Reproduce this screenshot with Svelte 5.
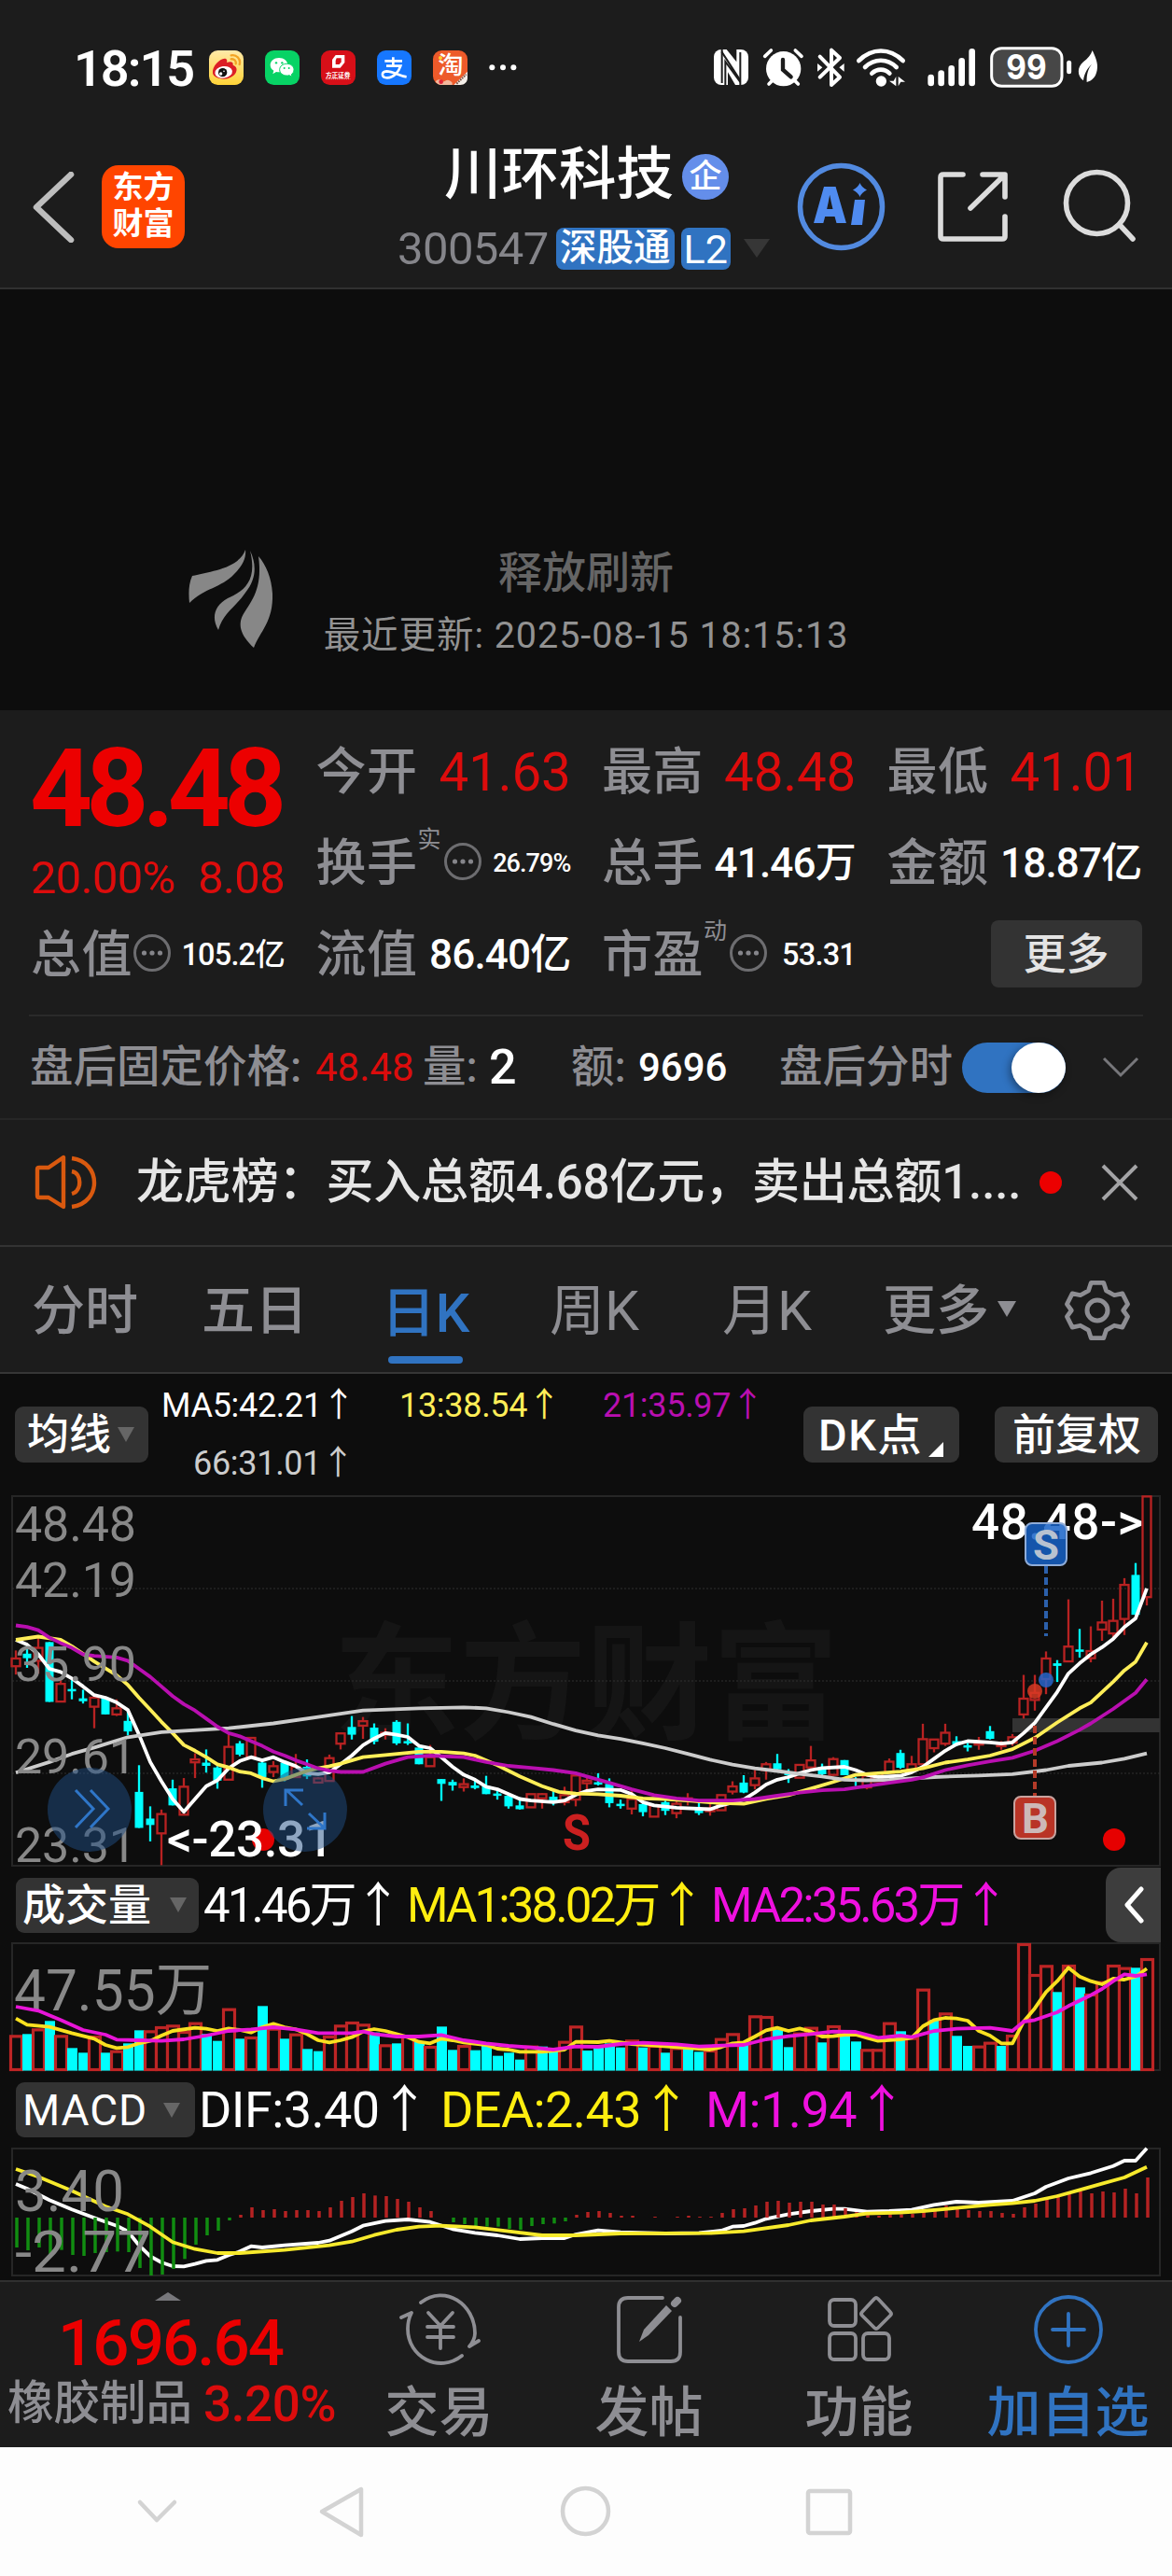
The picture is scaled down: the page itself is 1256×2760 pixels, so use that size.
<script lang="ts">
  type Point = [number, number];

  const STEP = 12;
  const px = (i: number) => 10 + i * STEP;

  // every pane keeps its own vertical origin and scale
  const priceY = (v: number) => (v - 385) * 0.3444;
  const volY = (v: number) => (v - 275) / 3;
  const macdY = (v: number) => (v - 936) / 3;

  const parse = (s: string): Point[] =>
    s
      .trim()
      .split(/\s+/)
      .map((p) => p.split(',').map(Number) as Point);

  const line = (s: string, y: (v: number) => number) =>
    parse(s)
      .map(([i, v]) => `${px(i)},${y(v).toFixed(1)}`)
      .join(' ');

  // up/down, body top, body bottom, high, low
  const candles = `
    r893,917,868,943 c878,892,848,922 r860,900,830,940 c842,1028,842,1028 r972,1027,960,1027 c988,995,960,1020
    c1017,1026,990,1033 r1015,1043,1010,1110 c1015,1067,1015,1067 r1048,1067,1020,1072 c1087,1120,1050,1132
    c1308,1420,1225,1420 c1391,1411,1353,1462 r1377,1437,1363,1536 c1297,1350,1270,1350 r1292,1379,1265,1380
    r1207,1216,1188,1265 c1217,1227,1176,1248 c1232,1273,1228,1298 r1168,1270,1128,1270 c1157,1192,1150,1197
    r1140,1200,1140,1200 c1217,1262,1212,1295 r1228,1246,1212,1262 c1217,1270,1217,1275 r1230,1262,1190,1262
    c1230,1260,1207,1268 r1266,1279,1262,1279 r1203,1274,1192,1274 r1126,1158,1126,1176 c1106,1130,1072,1145
    r1088,1102,1075,1143 c1108,1152,1095,1160 r1124,1130,1110,1145 c1090,1157,1085,1162 c1150,1156,1095,1162
    c1170,1222,1170,1222 r1200,1228,1162,1228 c1268,1283,1268,1336 c1277,1288,1270,1304 r1284,1293,1266,1307
    c1288,1296,1270,1300 c1290,1315,1258,1315 c1313,1320,1305,1332 c1320,1353,1318,1360 c1350,1362,1325,1363
    r1315,1356,1315,1356 r1315,1328,1312,1360 c1323,1340,1305,1350 r1318,1340,1292,1350 r1257,1332,1257,1353
    r1273,1281,1262,1300 c1278,1284,1250,1288 c1283,1343,1266,1356 c1345,1351,1332,1360 r1330,1360,1300,1378
    c1346,1371,1340,1384 r1350,1385,1350,1385 c1340,1367,1335,1380 r1345,1374,1335,1390 r1328,1335,1312,1350
    c1362,1374,1340,1380 r1360,1368,1340,1382 r1318,1365,1318,1365 r1291,1307,1275,1316 c1279,1310,1256,1312
    r1266,1287,1240,1300 r1222,1240,1215,1270 c1219,1238,1190,1243 c1246,1256,1237,1280 r1224,1264,1224,1264
    r1210,1232,1165,1238 c1232,1253,1220,1257 r1206,1255,1200,1258 c1209,1256,1209,1256 c1268,1276,1262,1290
    r1258,1294,1250,1300 r1250,1275,1250,1275 r1214,1248,1204,1248 c1187,1233,1177,1236 r1222,1240,1196,1245
    r1144,1222,1096,1222 r1145,1172,1145,1185 r1124,1158,1096,1165 c1150,1160,1135,1166 c1163,1168,1155,1182
    r1155,1160,1137,1177 c1119,1143,1103,1145 r1160,1165,1150,1177 r1138,1155,1128,1165 r1018,1067,944,1080
    r1000,1022,944,1055 r893,957,871,1004 c908,916,898,966 r856,902,709,902 c865,871,801,890 r870,892,793,905
    r781,803,713,838 r776,815,707,830 r664,770,643,820 c633,757,596,757 r389,702,389,728`
    .trim()
    .split(/\s+/)
    .map((s, i) => {
      const [top, bottom, high, low] = s.slice(1).split(',').map((v) => priceY(+v));
      return { x: px(i), up: s[0] === 'r', top, bottom, high, low };
    });

  const ma5 = line(
    '0,835 1,850 2,880 3,925 4,935 5,955 6,980 7,1007 8,1015 9,1030 10,1053 11,1130 12,1215 13,1275 14,1330 15,1370 16,1330 17,1290 18,1272 19,1235 20,1212 21,1200 22,1210 23,1200 24,1215 25,1228 26,1250 27,1253 28,1247 29,1222 30,1195 31,1163 32,1142 33,1125 34,1130 35,1137 36,1165 37,1172 38,1200 39,1230 40,1255 41,1270 42,1292 43,1300 44,1315 45,1330 46,1335 48,1340 49,1335 50,1317 51,1305 52,1300 54,1302 55,1315 56,1340 57,1350 59,1357 62,1362 63,1350 65,1332 66,1310 67,1285 68,1270 69,1262 70,1250 71,1240 72,1234 74,1230 75,1240 76,1255 77,1262 79,1258 80,1247 81,1230 82,1205 83,1180 84,1160 85,1150 87,1154 88,1158 89,1154 90,1125 91,1093 92,1045 93,997 94,940 95,908 96,880 97,858 98,832 99,795 100,768 101,675',
    priceY
  );
  const ma13 = line(
    '0,835 2,825 4,835 5,855 7,902 9,945 10,975 11,1015 12,1052 13,1090 14,1125 15,1162 16,1180 17,1200 18,1222 19,1232 20,1245 21,1250 22,1265 23,1275 24,1268 25,1255 26,1243 27,1235 28,1228 29,1220 31,1200 33,1193 36,1183 38,1183 40,1188 41,1195 43,1225 45,1260 47,1290 48.5,1308 50,1313 52,1315 54,1320 56,1328 58,1330 60,1335 63,1343 65,1345 67,1330 69,1318 71,1298 73,1277 75,1255 77,1250 79,1245 81,1235 83,1217 85,1207 87,1195 89,1175 91,1140 93,1092 95,1048 96,1030 98,965 99,930 100,903 101,843',
    priceY
  );
  const ma21 = line(
    '0,790 1,795 2,805 3,828 4,845 5,860 6,880 7,885 9,890 10,900 11,925 12,950 13,980 14,1010 15,1035 16,1055 17,1080 18,1105 19,1125 20,1135 21,1150 22,1165 23,1183 24,1195 25,1210 26,1222 27,1235 28,1242 29,1246 31,1246 33,1220 35,1200 37,1195 40,1200 42,1215 44,1227 46,1233 48,1240 50,1250 51,1260 53,1280 55,1300 57,1318 59,1328 61,1335 64,1335 66,1330 68,1320 70,1310 72,1303 74,1300 76,1290 78,1280 80,1270 81,1263 83,1240 85,1225 87,1213 89,1202 91,1180 93,1150 95,1115 96,1095 98,1050 100,1000 101,958',
    priceY
  );
  const ma66 = line(
    '0,1248 3,1215 5,1190 7,1170 10,1138 13,1122 19,1110 23,1095 27,1075 31,1055 36,1048 40,1045 42,1048 44,1060 46,1075 48,1097 50,1117 52,1132 54,1143 56,1157 58,1172 60,1190 62,1208 64,1223 66,1235 68,1243 70,1252 72,1260 74,1270 76,1272 78,1270 82,1262 86,1257 89,1253 92,1240 94,1227 97,1217 99,1205 101,1188',
    priceY
  );

  const volumes = `
    r573 c570 r552 c528 r573 c615 c630 r575 c630 r622 c600 c558 r558 r545 r540 r560 r532 c570 c592 r487
    c585 r578 c480 r550 c585 r568 c618 c625 r575 r540 r530 r537 c565 r603 c600 r575 c595 r608 c546 c621
    r605 c622 c605 c640 c630 c652 r607 c610 c620 r592 r543 c623 c612 c600 c613 r588 c613 r605 c630 r612
    c618 c627 r620 r583 r567 c605 r510 r512 c555 c612 r565 r547 c597 r542 c570 c594 r618 r618 r532 c561
    r580 r424 c525 r501 c576 c608 r607 r595 c608 r572 r278 r377 r348 c435 r347 c420 r440 r400 r347 r355
    c357 r326`
    .trim()
    .split(/\s+/)
    .map((s, i) => ({ x: px(i), up: s[0] === 'r', top: volY(+s.slice(1)) }));

  const volMa1 = line(
    '0,520 1,540 3,547 5,567 7,585 8,605 9,615 10,612 11,600 12,592 13,575 14,560 16,550 17,553 18,560 19,552 20,557 21,565 22,548 23,537 24,548 25,555 26,570 27,590 28,597 29,590 30,580 31,562 32,554 33,560 34,570 35,580 36,595 37,600 38,585 39,590 40,597 42,605 43,617 44,620 45,627 47,627 49,620 50,595 52,596 53,592 55,602 57,607 59,612 61,617 62,620 63,612 64,600 65,597 66,578 67,558 68,550 69,560 70,552 71,562 72,578 73,577 74,572 75,572 76,582 77,592 79,587 80,582 81,545 82,525 83,518 84,520 85,527 86,560 87,575 88,600 89,600 90,530 91,487 92,435 93,400 94,357 95,385 96,400 97,410 98,392 99,395 100,385 101,360',
    volY
  );
  const volMa2 = line(
    '0,482 2,495 4,525 6,557 8,572 9,588 11,590 13,592 15,587 17,575 19,560 21,555 23,548 25,555 27,567 30,567 31,562 32,570 34,578 36,578 38,573 40,590 42,600 44,608 46,613 48,620 50,610 52,611 54,602 56,598 59,603 61,610 63,607 65,605 67,587 69,577 71,570 73,562 75,563 77,582 79,575 80,580 82,560 84,553 87,550 89,560 90,530 91,525 93,500 94,480 96,445 97,425 98,400 99,378 100,383 101,378',
    volY
  );

  const MACD_ZERO = 1161;
  const macd = [
    1257, 1266, 1257, 1281, 1265, 1281, 1284, 1275, 1272, 1270, 1272, 1323, 1347, 1344, 1326, 1294, 1248, 1218,
    1203, 1170, 1152, 1128, 1137, 1134, 1140, 1137, 1137, 1140, 1128, 1107, 1095, 1083, 1090, 1092, 1101, 1110,
    1128, 1140, 1161, 1176, 1182, 1188, 1190, 1190, 1197, 1200, 1188, 1182, 1180, 1173, 1152, 1143, 1140, 1146,
    1155, 1155, 1161, 1158, 1161, 1158, 1155, 1158, 1158, 1146, 1134, 1131, 1122, 1110, 1107, 1113, 1110, 1110,
    1119, 1119, 1131, 1143, 1152, 1155, 1149, 1150, 1149, 1137, 1131, 1122, 1128, 1137, 1140, 1140, 1146, 1149,
    1128, 1116, 1095, 1086, 1077, 1077, 1083, 1077, 1080, 1068, 1083, 1032,
  ];
  const dif = line(
    '0,1053 1,1068 3,1105 5,1135 7,1162 9,1187 10,1205 11,1250 12,1285 13,1305 14,1317 15,1318 16,1310 17,1300 18,1297 19,1282 20,1270 21,1253 22,1257 24,1250 27,1242 28,1235 29,1220 30,1205 31,1187 33,1172 35,1167 37,1175 39,1198 41,1210 43,1218 45,1230 47,1227 49,1227 50,1215 52,1202 54,1208 58,1212 61,1210 63,1203 64,1190 65,1188 66,1178 67,1165 69,1150 71,1140 73,1133 74,1133 76,1142 78,1140 80,1136 82,1120 84,1110 86,1113 89,1107 90,1095 91,1083 92,1062 94,1035 96,1018 98,995 99,978 100,978 101,938',
    macdY
  );
  const dea = line(
    '0,1005 2,1030 5,1075 8,1125 10,1150 12,1190 14,1240 16,1262 18,1275 20,1275 24,1265 28,1250 30,1238 32,1217 34,1200 36,1190 38,1187 41,1192 44,1205 47,1218 50,1218 54,1212 62,1211 65,1205 69,1185 71,1170 74,1158 76,1148 79,1145 81,1140 84,1130 87,1120 89,1115 91,1107 93,1092 95,1072 97,1052 99,1032 101,998',
    macdY
  );

  const priceLabels = [
    { text: '48.48', y: 49 },
    { text: '42.19', y: 109 },
    { text: '35.90', y: 199 },
    { text: '29.61', y: 298 },
    { text: '23.31', y: 393 },
  ];
</script>

{#snippet more()}
  <svg class="more-dot" width="42" height="42" viewBox="0 0 42 42">
    <circle cx="21" cy="21" r="18.5" />
    <circle class="fill" cx="12.5" cy="21" r="2.6" />
    <circle class="fill" cx="21" cy="21" r="2.6" />
    <circle class="fill" cx="29.5" cy="21" r="2.6" />
  </svg>
{/snippet}

<div class="screen">
  <div class="status">
    <span class="clock">18:15</span>
    <svg class="apps" width="350" height="70" viewBox="0 0 1050 210">
      <defs>
        <linearGradient id="weibo" x2="0" y2="1">
          <stop offset="0" stop-color="#ffe9a8" />
          <stop offset="1" stop-color="#ffd338" />
        </linearGradient>
      </defs>
      <rect x="42" y="42" width="111" height="111" rx="28" fill="url(#weibo)" />
      <path d="M54 115c-3-22 22-46 38-47 8 0 9 7 7 13 12-5 22-3 20 8 13 5 14 15 9 25-7 12-22 20-38 20-20 0-35-8-36-19z" fill="#dc1f26" />
      <ellipse cx="89" cy="112" rx="28" ry="19" fill="#fff" transform="rotate(-8 89 112)" />
      <circle cx="86" cy="113" r="14" fill="#111" />
      <circle cx="80" cy="117" r="5" fill="#fff" />
      <circle cx="90" cy="109" r="2.5" fill="#fff" />
      <path d="M113 58c17-4 32 12 27 29M113 70c10-2 17 6 15 15" fill="none" stroke="#f3a324" stroke-width="7" stroke-linecap="round" />

      <rect x="222" y="42" width="111" height="111" rx="28" fill="#07d365" />
      <path d="M267 66c16 0 28 10 28 23s-12 23-28 23c-3 0-6 0-9-1l-11 7 3-11c-7-4-11-11-11-18 0-13 12-23 28-23z" fill="#fff" />
      <path d="M292 85c13 0 23 8 23 19 0 6-3 12-8 15l2 8-9-5c-3 1-5 1-8 1-13 0-23-8-23-19s10-19 23-19z" fill="#fff" stroke="#07d365" stroke-width="3" />
      <g fill="#07d365">
        <circle cx="258" cy="82" r="3.5" /><circle cx="277" cy="82" r="3.5" />
        <circle cx="284" cy="99" r="3" /><circle cx="299" cy="99" r="3" />
      </g>

      <rect x="402" y="42" width="111" height="111" rx="28" fill="#d70f18" />
      <path d="M449 57h29v24l-14 17h-26V72z" fill="#fff" />
      <path d="M452 67h15v12l-6 8h-12V75z" fill="#d70f18" />
      <text x="417" y="128" font-size="20" font-weight="700" fill="#fff" textLength="79">方正证券</text>
      <path d="M417 134h79" stroke="#f0a0a0" stroke-width="3" stroke-dasharray="4 2" />

      <rect x="582" y="42" width="111" height="111" rx="28" fill="#1677ff" />
      <path d="M634 64v28M607 76h56M612 92h46c-6 18-22 38-43 38-20 0-20-20-2-21 22 0 38 14 64 18" fill="none" stroke="#fff" stroke-width="8" />

      <rect x="762" y="42" width="111" height="111" rx="28" fill="#ed5a2a" />
      <text x="778" y="116" font-size="80" font-weight="500" fill="#fff" textLength="82" lengthAdjust="spacingAndGlyphs">淘</text>
      <path d="M873 110v20c0 14-9 23-24 23h-20z" fill="#f4eee8" />
      <path d="M838 149l31-30" stroke="#7a5040" stroke-width="6" stroke-dasharray="5 3" />
      <circle cx="786" cy="66" r="6" fill="#ffd02f" />
      <path d="M770 142c12-12 20-4 24 0s14-16 30 4v7h-36c-8 0-14-4-18-11z" fill="#f3b79c" />
      <circle cx="788" cy="143" r="7" fill="#df2538" />
      <g fill="#fff"><circle cx="952" cy="97" r="9" /><circle cx="987" cy="97" r="9" /><circle cx="1021" cy="97" r="9" /></g>
    </svg>
    <svg class="system" width="440" height="70" viewBox="0 0 1320 210">
      <rect x="45" y="39" width="111" height="114" rx="24" fill="#fff" />
      <path d="M71 39v108M130 153V48" stroke="#1c1c1c" stroke-width="6" />
      <path d="M70 46l60 92M82 153V78l48 66" fill="none" stroke="#1c1c1c" stroke-width="6" />
      <path d="M90 112v41h24z" fill="#1c1c1c" />
      <path d="M86 39h32v40z" fill="#1c1c1c" />
      <circle cx="269" cy="101" r="56" fill="#fff" />
      <path d="M209 61l20-19M327 61l-20-19M222 150l16-16M316 150l-16-16" stroke="#fff" stroke-width="11" stroke-linecap="round" />
      <path d="M267 72v32l26 23" fill="none" stroke="#1c1c1c" stroke-width="13" stroke-linecap="round" />
      <path d="M386 128l64-62-27-25v112l27-25-64-66" fill="none" stroke="#fff" stroke-width="12" stroke-linejoin="round" stroke-linecap="round" />
      <path d="M378 84v26l16-13zM464 84v26l-16-13z" fill="#fff" />
      <path d="M511 75c43-42 99-42 142 0M531 96c30-29 72-29 101 0M553 116c17-16 41-16 57 0" fill="none" stroke="#fff" stroke-width="14" stroke-linecap="round" />
      <circle cx="583" cy="141" r="17" fill="#fff" />
      <path d="M631 126v31l-22-17h14zM638 157v-31l22 17h-14z" fill="#fff" />
      <path d="M743 129v18M776 116v31M809 100v47M842 76v71M875 46v101" stroke="#fff" stroke-width="20" stroke-linecap="round" />
      <rect x="938" y="35" width="226" height="122" rx="32" fill="#474747" stroke="#fff" stroke-width="9" />
      <text x="985" y="136" font-family="Inter" font-size="112" font-weight="700" fill="#fff" textLength="130" lengthAdjust="spacingAndGlyphs">99</text>
      <path d="M1187 82v28" stroke="#fff" stroke-width="15" stroke-linecap="round" />
      <path d="M1262 42c8 18 20 40 15 64-4 22-16 34-33 38-1-24 4-44 17-58-17 14-25 32-28 53-21-15-20-44 0-60 15-12 24-22 29-37z" fill="#fff" />
    </svg>
  </div>

  <header class="header">
    <svg class="back" width="46" height="76" viewBox="0 0 46 76"><path d="M42 3L5 38l37 35" /></svg>
    <div class="logo"><span>东方</span><span>财富</span></div>
    <div class="title">
      <div class="name">川环科技<i>企</i></div>
      <div class="code">
        <span>300547</span><b class="tag">深股通</b><b class="tag">L2</b>
        <svg width="28" height="20" viewBox="0 0 28 20"><path d="M0 0h28L14 20z" fill="#363636" /></svg>
      </div>
    </div>
    <svg class="tools" width="370" height="100" viewBox="0 0 370 100">
      <circle cx="51.500" cy="51.500" r="44" fill="none" stroke="#528ae0" stroke-width="5.5" />
      <text x="21" y="69" font-family="Inter" font-size="54" font-weight="900" fill="#4f8bf0" textLength="37" lengthAdjust="spacingAndGlyphs">A</text>
      <path d="M66 44h11l-3 27H62zM71.500 26q2 5 7.500 7.500-5.500 2.500-7.500 7.500-2-5-7.500-7.500 5.500-2.500 7.500-7.500z" fill="#4f8bf0" />
      <g fill="none" stroke="#dcdcdc" stroke-width="5.600" stroke-linecap="round" stroke-linejoin="round">
        <path d="M182 17h-21q-3 0-3 3v63q0 3 3 3h63q3 0 3-3V62M203 17h24v24M226 18L190 53" />
        <circle cx="325.500" cy="47.500" r="33" />
        <path d="M350 71l14 15" />
      </g>
    </svg>
  </header>

  <section class="refresh">
    <svg width="94" height="108" viewBox="0 0 94 108">
      <g fill="#878787">
        <path d="M62 1C55 21 25 24 5 29 1 38 1 48 2 58c16-16 34-16 48-31 9-9 13-17 12-26z" />
        <path d="M67 2c8 32-6 43-24 51-14 8-18 20-10 34 5-18 18-24 29-40 12-15 12-30 5-45z" />
        <path d="M76 8c4 30-4 44-15 60-8 12-5 24 10 38 7-18 21-28 20-58-1-17-7-31-15-40z" />
      </g>
    </svg>
    <div class="refresh-text">
      <strong>释放刷新</strong>
      <span>最近更新: 2025-08-15 18:15:13</span>
    </div>
  </section>

  <section class="quote">
    <div class="price">
      <strong>48.48</strong>
      <div><span>20.00%</span><span>8.08</span></div>
    </div>
    <div class="cell"><label>今开</label><b class="red">41.63</b></div>
    <div class="cell"><label>最高</label><b class="red">48.48</b></div>
    <div class="cell"><label>最低</label><b class="red">41.01</b></div>
    <div class="cell"><label>换手</label><sup>实</sup>{@render more()}<b class="xs">26.79%</b></div>
    <div class="cell"><label>总手</label><b>41.46万</b></div>
    <div class="cell"><label>金额</label><b>18.87亿</b></div>
    <div class="cell"><label>总值</label>{@render more()}<b class="sm">105.2亿</b></div>
    <div class="cell"><label>流值</label><b>86.40亿</b></div>
    <div class="cell"><label>市盈</label><sup>动</sup>{@render more()}<b class="sm">53.31</b></div>
    <div class="cell end"><button>更多</button></div>
  </section>

  <section class="after">
    <span>盘后固定价格:</span>
    <b class="red">48.48</b>
    <span>量:</span>
    <b class="big">2</b>
    <span>额:</span>
    <b>9696</b>
    <span>盘后分时</span>
    <div class="toggle"><i></i></div>
    <svg width="40" height="26" viewBox="0 0 40 26"><path d="M2 3l18 18L38 3" fill="none" stroke="#77777b" stroke-width="3" /></svg>
  </section>

  <section class="news">
    <svg width="68" height="60" viewBox="0 0 68 60">
      <path d="M3 16q0-2 2-2h10L31 3v53L15 46H5q-2 0-2-2zM40 18c11 2 11 21 0 24M40 4c32 4 32 48 0 52" fill="none" stroke="#d9590f" stroke-width="4.4" stroke-linejoin="round" />
    </svg>
    <p>龙虎榜：买入总额4.68亿元，卖出总额1....</p>
    <i></i>
    <svg width="40" height="42" viewBox="0 0 40 42"><path d="M2 3l36 36M38 3L2 39" stroke="#a4a4a6" stroke-width="4" /></svg>
  </section>

  <nav class="tabs">
    <span>分时</span>
    <span>五日</span>
    <span class="active">日K</span>
    <span>周K</span>
    <span>月K</span>
    <span>更多<svg width="20" height="17" viewBox="0 0 20 17"><path d="M0 0h20L10 17z" fill="#8e8e93" /></svg></span>
    <svg width="70" height="70" viewBox="0 0 70 70" fill="none" stroke="#8e8e93" stroke-width="5" stroke-linejoin="round">
      <path d="M28 4h14l3 9 9 5 9-2 6 12-5 7 5 7-6 12-9-2-9 5-3 9H28l-3-9-9-5-9 2-6-12 5-7-5-7 6-12 9 2 9-5z" transform="translate(1.5 1.5) scale(.957)" />
      <circle cx="35" cy="35" r="11" />
    </svg>
  </nav>

  <section class="charts">
    <div class="ma-bar">
      <span class="pill">均线<i class="down"></i></span>
      <div class="ma-list">
        <span>MA5:42.21↑</span>
        <span class="yellow">13:38.54↑</span>
        <span class="purple">21:35.97↑</span>
        <span class="silver">66:31.01↑</span>
      </div>
      <span class="pill dk">DK点<i class="corner"></i></span>
      <span class="pill adj">前复权</span>
    </div>

    <svg class="pane" width="1237" height="399" viewBox="0 0 1237 399">
      <text x="350" y="251" font-size="136" font-weight="700" fill="#151515" textLength="542" lengthAdjust="spacingAndGlyphs">东方财富</text>
      <rect class="frame" x="6" y="1" width="1230" height="396" />
      {#each [100, 199, 298] as y}
        <line class="grid" x1="6" x2="1236" y1={y} y2={y} />
      {/each}
      <rect x="1078" y="239" width="158" height="15" fill="#333" />
      {#each candles as c}
        <line x1={c.x} x2={c.x} y1={c.high} y2={c.up ? c.top : c.low} class={c.up ? 'up' : 'down-line'} />
        {#if c.up}
          <line x1={c.x} x2={c.x} y1={c.bottom} y2={c.low} class="up" />
          <rect class="up" x={c.x - 4.5} y={c.top} width="9" height={Math.max(2, c.bottom - c.top)} />
        {:else}
          <rect x={c.x - 4.5} y={c.top} width="9" height={Math.max(2.5, c.bottom - c.top)} fill="#00ffff" />
        {/if}
      {/each}
      <polyline points={ma5} stroke="#fff" />
      <polyline points={ma13} stroke="#ffee58" />
      <polyline points={ma66} stroke="#ccc" />
      <polyline points={ma21} stroke="#b90fb0" />
      {#each priceLabels as l}
        <text class="axis" x="9" y={l.y} font-size="52" textLength="130">{l.text}</text>
      {/each}
      <circle cx="275" cy="369" r="12" fill="#e60000" />
      <text x="172" y="387" font-size="53" font-weight="500" fill="#fff" textLength="178">&lt;-23.31</text>
      <g fill="#204d83" fill-opacity=".5">
        <circle cx="89" cy="337" r="45" />
        <circle cx="320" cy="337" r="45" />
      </g>
      <path d="M74 316l19 20-19 20M90 316l19 20-19 20M317 332l-17-16M299 333v-17h19M324 341l17 16M341 340v17h-19" fill="none" stroke="#2f76c8" stroke-width="3" />
      <text x="596" y="380" font-size="54" font-weight="700" fill="#cb2020" textLength="30" lengthAdjust="spacingAndGlyphs">S</text>
      <circle cx="1187" cy="369" r="12" fill="#e60000" />
      <text x="1034" y="47" font-size="53" font-weight="500" fill="#fff" textLength="184">48.48-&gt;</text>
      <line x1="1114" x2="1114" y1="76" y2="151" stroke="#2c60ab" stroke-width="4" stroke-dasharray="8 4" />
      <line x1="1102" x2="1102" y1="247" y2="322" stroke="#b33a28" stroke-width="4" stroke-dasharray="8 4" />
      <circle cx="1114" cy="198" r="8" fill="#2865ca" fill-opacity=".85" />
      <circle cx="1102" cy="210" r="8" fill="#d83a24" fill-opacity=".85" />
      <rect x="1092" y="30" width="44" height="45" rx="7" fill="#1763c8" fill-opacity=".85" stroke="#8facd8" stroke-width="2" />
      <text x="1100" y="69" font-size="44" font-weight="700" fill="#b8c2d0" textLength="28" lengthAdjust="spacingAndGlyphs">S</text>
      <rect x="1080" y="323" width="44" height="45" rx="7" fill="#b93426" stroke="#c7a39f" stroke-width="2" />
      <text x="1088" y="362" font-size="44" font-weight="700" fill="#cdb9b8" textLength="29" lengthAdjust="spacingAndGlyphs">B</text>
    </svg>

    <div class="legend vol">
      <span class="pill">成交量<i class="down"></i></span>
      <span>41.46万↑</span>
      <span class="yellow">MA1:38.02万↑</span>
      <span class="pink">MA2:35.63万↑</span>
      <span class="fold">
        <svg width="22" height="40" viewBox="0 0 22 40"><path d="M19 3L4 20l15 17" fill="none" stroke="#fff" stroke-width="5" stroke-linecap="round" stroke-linejoin="round" /></svg>
      </span>
    </div>

    <svg class="pane" width="1237" height="139" viewBox="0 0 1237 139">
      <rect class="frame" x="6" y="1" width="1230" height="136" />
      {#each volumes as v}
        {#if v.up}
          <rect class="vol-up" x={v.x - 5.500} y={v.top + 1.5} width="12" height={135 - v.top} />
        {:else}
          <rect x={v.x - 5} y={v.top} width="11" height={137.5 - v.top} fill="#00ffff" />
        {/if}
      {/each}
      <text class="axis" x="8" y="73" font-size="62" textLength="212" lengthAdjust="spacingAndGlyphs">47.55万</text>
      <polyline points={volMa1} stroke="#f9e020" />
      <polyline points={volMa2} stroke="#e815d8" />
    </svg>

    <div class="legend macd">
      <span class="pill">MACD<i class="down"></i></span>
      <span>DIF:3.40↑</span>
      <span class="yellow">DEA:2.43↑</span>
      <span class="pink">M:1.94↑</span>
    </div>

    <svg class="pane" width="1237" height="139" viewBox="0 0 1237 139">
      <rect class="frame" x="6" y="1" width="1230" height="136" />
      <polyline points={dif} stroke="#fff" />
      {#each macd as v, i}
        <line x1={px(i) + 1} x2={px(i) + 1} y1={macdY(MACD_ZERO)} y2={macdY(v)} stroke={v > MACD_ZERO ? '#118d11' : '#b52222'} stroke-width="3.5" />
      {/each}
      <polyline points={dea} stroke="#f7ea2c" />
      <text class="axis" x="9" y="68" font-size="62" textLength="117" lengthAdjust="spacingAndGlyphs">3.40</text>
      <text class="axis" x="9" y="133" font-size="62" textLength="146" lengthAdjust="spacingAndGlyphs">-2.77</text>
    </svg>
  </section>

  <footer class="bottom">
    <div class="index">
      <i class="up-mark"></i>
      <strong>1696.64</strong>
      <div><span>橡胶制品</span><b>3.20%</b></div>
    </div>
    <div class="action">
      <svg width="88" height="80" viewBox="0 0 88 80">
        <path d="M24 10C50-10 82 12 82 43q0 7-6 14l10-6M68 67C44 86 10 69 10 38q0-9 4-17L3 26" />
        <path d="M32 21l13 14 13-14M31 36h28M31 47h28M45 35v24" />
      </svg>
      <span>交易</span>
    </div>
    <div class="action">
      <svg width="88" height="80" viewBox="0 0 88 80">
        <path d="M58 5H21q-10 0-10 10v48q0 10 10 10h46q10 0 10-10V26" />
        <path d="M33 52l5-13 24-26 6 6-25 26z" fill="#8e8e93" stroke="none" />
        <path d="M71 11l3-3" stroke-width="8" />
      </svg>
      <span>发帖</span>
    </div>
    <div class="action">
      <svg width="88" height="80" viewBox="0 0 88 80">
        <rect x="12" y="7" width="28" height="28" rx="5" />
        <rect x="12" y="43" width="28" height="28" rx="5" />
        <rect x="48" y="43" width="28" height="28" rx="5" />
        <path d="M60 6q2-2 4 0l13 14q2 2 0 4L64 37q-2 2-4 0L47 24q-2-2 0-4z" />
      </svg>
      <span>功能</span>
    </div>
    <div class="action blue">
      <svg width="88" height="80" viewBox="0 0 88 80">
        <circle cx="44" cy="39" r="35" />
        <path d="M44 22v34M27 39h34" />
      </svg>
      <span>加自选</span>
    </div>
  </footer>

  <div class="sysnav">
    <svg width="1256" height="138" viewBox="0 0 1256 138" fill="none" stroke="#d3d3d3" stroke-width="4.5" stroke-linejoin="round" stroke-linecap="round">
      <path d="M150 59l18 19 19-19" />
      <path d="M387 45v49L345 69z" />
      <circle cx="627.5" cy="68.5" r="24.5" />
      <rect x="866" y="47" width="45" height="45" rx="2" />
    </svg>
  </div>
</div>

<style>
  :global(body) {
    margin: 0;
    background: #1c1c1c;
  }

  .screen {
    width: 1256px;
    height: 2760px;
    overflow: hidden;
    background: #1c1c1c;
    color: #fff;
    font-family: Roboto, 'Noto Sans CJK SC', sans-serif;
    line-height: 1;
    white-space: nowrap;
  }

  svg {
    display: block;
    flex: none;
  }

  i {
    font-style: normal;
  }

  b {
    font-weight: 500;
  }

  .red {
    color: #dc0c0c;
  }

  .yellow {
    color: #ffee10;
  }

  .status {
    display: grid;
    grid-template-columns: 131px 350px 440px;
    height: 140px;
    padding-left: 79px;
    align-items: start;
  }

  .clock {
    padding-top: 47px;
    font-size: 54px;
    font-weight: 600;
    letter-spacing: -2px;
  }

  .apps,
  .system {
    margin-top: 40px;
  }

  .system {
    margin-left: 190px;
  }

  .header {
    display: grid;
    grid-template-columns: 75px 90px 222px 453px 370px;
    height: 170px;
    padding-left: 34px;
    border-bottom: 2px solid #303030;
    box-sizing: border-box;
  }

  .back {
    margin-top: 44px;
    fill: none;
    stroke: #bdbdbd;
    stroke-width: 6.5;
    stroke-linecap: round;
    stroke-linejoin: round;
  }

  .logo {
    display: flex;
    flex-direction: column;
    align-items: center;
    justify-content: center;
    gap: 3px;
    width: 89px;
    height: 89px;
    margin-top: 37px;
    border-radius: 18px;
    background: #ff4500;
    font-size: 33px;
    font-weight: 700;
  }

  .logo span {
    height: 36px;
    line-height: 34px;
  }

  .title {
    grid-column: 4;
  }

  .name {
    display: flex;
    align-items: center;
    height: 92px;
    padding: 4px 0 0 55px;
    box-sizing: border-box;
    font-size: 61.5px;
    font-weight: 500;
  }

  .name i {
    width: 50px;
    margin: 2px 0 0 9px;
    border-radius: 50%;
    background: #648eea;
    font-size: 35px;
    line-height: 49px;
    text-align: center;
  }

  .code {
    display: flex;
    align-items: center;
    height: 46px;
    margin-top: 11px;
    padding-left: 5px;
    color: #85858a;
    font-size: 49px;
  }

  .code span {
    width: 170px;
    letter-spacing: -0.6px;
  }

  .code svg {
    margin-left: 14px;
  }

  .tag {
    height: 45px;
    margin-right: 7px;
    padding: 0 4px;
    border-radius: 8px;
    background: #3073c1;
    color: #fff;
    font-size: 39.5px;
    line-height: 43px;
  }

  .tag + .tag {
    margin-right: 0;
    padding: 0 3px;
    font-size: 43px;
    line-height: 46px;
    font-weight: 400;
  }

  .tools {
    margin: 30px 0 0 -24px;
  }

  .refresh {
    display: flex;
    height: 451px;
    background: #0d0d0d;
  }

  .refresh > svg {
    margin: 278px 0 0 201px;
  }

  .refresh-text {
    display: flex;
    flex-direction: column;
    align-items: center;
    width: 568px;
    margin: 280px 0 0 49px;
    font-weight: 500;
  }

  .refresh-text strong {
    height: 53px;
    color: #656565;
    font-size: 47px;
    font-weight: 500;
  }

  .refresh-text span {
    margin-top: 18px;
    color: #929292;
    font-size: 39.5px;
    font-weight: 400;
    letter-spacing: 0.95px;
  }

  .quote {
    display: grid;
    grid-template-columns: 272px 273px 272px 273px;
    grid-template-rows: repeat(3, 98px);
    column-gap: 33.5px;
    height: 326px;
    padding: 17px 0 0 33px;
    box-sizing: border-box;
  }

  .price {
    grid-row: span 2;
    color: #ec0000;
  }

  .price strong {
    display: block;
    height: 138px;
    margin-left: -1px;
    font-size: 117px;
    line-height: 135px;
    font-weight: 700;
    letter-spacing: -6.8px;
  }

  .price div {
    display: flex;
    justify-content: space-between;
    color: #dc0c0c;
    font-size: 49px;
    letter-spacing: -0.7px;
  }

  .cell {
    display: flex;
    align-items: center;
  }

  .cell label {
    margin-top: 2px;
    color: #8e8e93;
    font-size: 54px;
    font-weight: 500;
    letter-spacing: 0.5px;
  }

  .cell b {
    margin-left: auto;
    font-size: 44px;
    letter-spacing: -0.8px;
  }

  .cell b.red {
    margin-top: 2px;
    font-size: 56.5px;
    font-weight: 400;
    letter-spacing: -0.2px;
  }

  .cell b.sm {
    font-size: 32.5px;
  }

  .cell b.xs {
    font-size: 27px;
    letter-spacing: -0.9px;
  }

  .cell sup {
    width: 27px;
    margin-top: -52px;
    color: #8e8e93;
    font-size: 25px;
    line-height: 25px;
    vertical-align: baseline;
  }

  .more-dot {
    margin-top: -5px;
    fill: none;
    stroke: #6d6d70;
    stroke-width: 3;
  }

  .more-dot .fill {
    fill: #85858a;
    stroke: none;
  }

  .end {
    justify-content: flex-end;
  }

  button {
    width: 162px;
    height: 72px;
    margin-top: -2px;
    padding: 0;
    border: 0;
    border-radius: 8px;
    background: #333;
    color: #e4e4e4;
    font: 500 46px/66px Roboto, 'Noto Sans CJK SC', sans-serif;
  }

  .after {
    display: grid;
    grid-template-columns: 306px 115px 71px 88px 72px 151px 196px 150px 40px;
    align-items: center;
    height: 111px;
    margin: 0 31px;
    padding-left: 1px;
    border-top: 2px solid #2a2a2a;
    box-sizing: border-box;
    color: #8e8e93;
    font-size: 46.5px;
    font-weight: 500;
  }

  .after b {
    color: #fff;
    font-size: 42px;
  }

  .after b.red {
    color: #dc0c0c;
    font-weight: 400;
  }

  .after .big {
    font-size: 52px;
  }

  .toggle {
    width: 111px;
    height: 54px;
    border-radius: 27px;
    background: #3073c1;
  }

  .toggle i {
    display: block;
    width: 58px;
    height: 54px;
    margin-left: 53px;
    border-radius: 50%;
    background: #fff;
    box-shadow: -2px 3px 8px #0006;
  }

  .news {
    display: grid;
    grid-template-columns: 109px 968px 66px 40px;
    align-items: center;
    height: 138px;
    padding-left: 37px;
    border-top: 2px solid #262626;
    border-bottom: 2px solid #333;
    box-sizing: border-box;
  }

  .news p {
    margin: -2px 0 0;
    color: #e6e6e6;
    font-size: 51px;
    font-weight: 500;
    letter-spacing: -0.15px;
  }

  .news i {
    width: 24px;
    height: 24px;
    border-radius: 50%;
    background: #ec0000;
  }

  .tabs {
    display: grid;
    grid-template-columns: 182px 196px 177px 185px 172px 195px 70px;
    height: 136px;
    padding-left: 34px;
    border-bottom: 2px solid #363636;
    box-sizing: border-box;
    color: #8e8e93;
    font-size: 57px;
    font-weight: 500;
  }

  .tabs span {
    display: flex;
    align-items: center;
    height: 136px;
  }

  .tabs span:nth-child(4),
  .tabs span:nth-child(5) {
    font-weight: 400;
    font-size: 59px;
  }

  .tabs span svg {
    margin: -4px 0 0 9px;
  }

  .tabs > svg {
    margin-top: 33px;
  }

  .tabs .active {
    flex-direction: column;
    justify-content: flex-end;
    width: 88px;
    height: 125px;
    color: #3073c1;
    font-size: 58px;
  }

  .tabs .active::after {
    content: '';
    width: 80px;
    height: 8px;
    margin-top: 17px;
    border-radius: 4px;
    background: #3073c1;
  }

  .charts {
    height: 971px;
    background: #0d0d0d;
  }

  .pane {
    margin-left: 7px;
    overflow: visible;
  }

  .pane polyline {
    fill: none;
    stroke-width: 3.8;
    stroke-linejoin: round;
  }

  .frame {
    fill: none;
    stroke: #262626;
    stroke-width: 2;
  }

  .grid {
    stroke: #303030;
    stroke-dasharray: 2 2;
  }

  .up {
    fill: none;
    stroke: #b82222;
    stroke-width: 2.3;
  }

  .down-line {
    stroke: #00ffff;
    stroke-width: 2.3;
  }

  .vol-up {
    fill: #0d0d0d;
    stroke: #bd2525;
    stroke-width: 3.2;
  }

  .axis {
    fill: #888;
  }

  .ma-bar {
    display: grid;
    grid-template-columns: 157px 688px 205px 176px;
    align-items: center;
    height: 130px;
    padding-left: 16px;
    box-sizing: border-box;
  }

  .pill {
    display: flex;
    align-items: center;
    width: 143px;
    height: 60px;
    padding-left: 13px;
    border-radius: 9px;
    background: #333;
    box-sizing: border-box;
    font-size: 45px;
    font-weight: 500;
  }

  .pill.dk {
    width: 167px;
    padding-left: 16px;
    font-size: 47px;
    letter-spacing: 1.5px;
  }

  .pill.adj {
    width: 175px;
    padding-left: 19px;
    font-size: 46px;
  }

  .down {
    margin-left: 7px;
    border: 9.5px solid transparent;
    border-top: 16px solid #666;
    border-bottom: 0;
  }

  .corner {
    margin: 32px 0 0 6px;
    border-left: 16px solid transparent;
    border-bottom: 16px solid #fff;
  }

  .ma-list {
    display: grid;
    grid-template-columns: 206px 220px 220px;
    grid-template-rows: 62px 62px;
    align-items: center;
    font-size: 36px;
    letter-spacing: -0.3px;
  }

  .ma-list .yellow {
    margin-left: 49px;
    color: #ffee58;
  }

  .ma-list .purple {
    margin-left: 47px;
    color: #b90fb0;
  }

  .ma-list .silver {
    margin-left: 34px;
    color: #ccc;
  }

  .legend {
    display: grid;
    align-items: center;
    padding-left: 17px;
    font-size: 51px;
    letter-spacing: -2.9px;
  }

  .legend .pill {
    width: 196px;
    height: 59px;
    padding-left: 7px;
    font-size: 46px;
    letter-spacing: 0;
  }

  .legend .down {
    margin-left: 20px;
  }

  .vol {
    grid-template-columns: 201px 218px 326px 423px 59px;
    height: 80px;
  }

  .macd {
    grid-template-columns: 196px 259px 284px 300px;
    height: 81px;
    font-size: 54px;
    letter-spacing: -0.6px;
  }

  .macd .pill {
    width: 192px;
    font-weight: 400;
    letter-spacing: 0.9px;
  }

  .macd .down {
    margin-left: 17px;
  }

  .pink {
    color: #ef10df;
  }

  .fold {
    display: grid;
    place-items: center;
    height: 80px;
    border-radius: 16px 0 0 16px;
    background: #3d3d3d;
  }

  .bottom {
    display: grid;
    grid-template-columns: 358px 225px 225px 225px 223px;
    height: 179px;
    border-top: 2px solid #303030;
    box-sizing: border-box;
  }

  .index {
    padding-top: 11px;
  }

  .up-mark {
    display: block;
    width: 0;
    margin-left: 166px;
    border: 14px solid transparent;
    border-bottom: 9px solid #77777b;
    border-top: 0;
  }

  .index strong {
    display: block;
    height: 84px;
    padding-left: 62px;
    color: #ec0000;
    font-size: 69px;
    line-height: 91px;
    font-weight: 500;
    letter-spacing: -1.9px;
  }

  .index div {
    display: flex;
    align-items: center;
    height: 54px;
    padding-left: 8px;
    color: #8e8e93;
    font-size: 49.5px;
    font-weight: 500;
  }

  .index div b {
    margin-left: 12px;
    color: #dc0c0c;
    font-size: 53px;
    letter-spacing: -0.4px;
  }

  .action {
    display: flex;
    flex-direction: column;
    align-items: center;
    padding-top: 12px;
    color: #8e8e93;
    font-size: 58px;
    font-weight: 500;
  }

  .action svg {
    fill: none;
    stroke: currentColor;
    stroke-width: 3.8;
    stroke-linecap: round;
    stroke-linejoin: round;
  }

  .action span {
    margin-top: 19px;
  }

  .blue {
    color: #3073c1;
  }

  .sysnav {
    height: 138px;
    background: #fdfdfd;
  }
</style>
